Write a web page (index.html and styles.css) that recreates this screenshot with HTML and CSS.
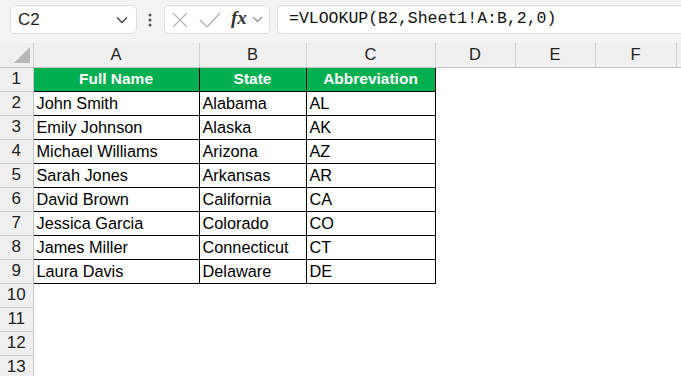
FILE: index.html
```html
<!DOCTYPE html>
<html lang="en">
<head>
  <meta charset="UTF-8">
  <title>Sheet1</title>
  <link rel="stylesheet" href="styles.css">
</head>
<body>
  <div class="formula-bar">
    <div class="name-box">
      <span>C2</span>
      <svg class="chev" width="12" height="8" viewBox="0 0 12 8"><path d="M1 1.5 L6 6.5 L11 1.5" fill="none" stroke="#444" stroke-width="1.3"/></svg>
    </div>
    <svg class="dots" width="4" height="14" viewBox="0 0 4 14"><circle cx="2" cy="2" r="1.5" fill="#555"/><circle cx="2" cy="7" r="1.5" fill="#555"/><circle cx="2" cy="12" r="1.5" fill="#555"/></svg>
    <div class="fx-box">
      <svg width="16" height="16" viewBox="0 0 16 16"><path d="M1 1 L15 15 M15 1 L1 15" stroke="#b4b4b4" stroke-width="1.3"/></svg>
      <svg width="22" height="16" viewBox="0 0 22 16"><path d="M1 8 L8 15 L21 1" fill="none" stroke="#b4b4b4" stroke-width="1.3"/></svg>
      <span class="fx">fx</span>
      <svg width="11" height="7" viewBox="0 0 11 7"><path d="M1 1 L5.5 5.5 L10 1" fill="none" stroke="#888" stroke-width="1.2"/></svg>
    </div>
    <div class="formula">=VLOOKUP(B2,Sheet1!A:B,2,0)</div>
  </div>

  <table class="sheet">
    <colgroup>
      <col class="c-num"><col class="c-a"><col class="c-b"><col class="c-c"><col class="c-d"><col class="c-e"><col class="c-f"><col>
    </colgroup>
    <tr class="col-head">
      <th class="corner"><span class="tri"></span></th>
      <th>A</th><th>B</th><th>C</th><th>D</th><th>E</th><th>F</th><th class="rest"></th>
    </tr>
    <tr>
      <td class="num">1</td>
      <td class="hd">Full Name</td><td class="hd">State</td><td class="hd">Abbreviation</td>
      <td></td><td></td><td></td><td></td>
    </tr>
    <tr><td class="num">2</td><td class="cell">John Smith</td><td class="cell">Alabama</td><td class="cell">AL</td><td></td><td></td><td></td><td></td></tr>
    <tr><td class="num">3</td><td class="cell">Emily Johnson</td><td class="cell">Alaska</td><td class="cell">AK</td><td></td><td></td><td></td><td></td></tr>
    <tr><td class="num">4</td><td class="cell">Michael Williams</td><td class="cell">Arizona</td><td class="cell">AZ</td><td></td><td></td><td></td><td></td></tr>
    <tr><td class="num">5</td><td class="cell">Sarah Jones</td><td class="cell">Arkansas</td><td class="cell">AR</td><td></td><td></td><td></td><td></td></tr>
    <tr><td class="num">6</td><td class="cell">David Brown</td><td class="cell">California</td><td class="cell">CA</td><td></td><td></td><td></td><td></td></tr>
    <tr><td class="num">7</td><td class="cell">Jessica Garcia</td><td class="cell">Colorado</td><td class="cell">CO</td><td></td><td></td><td></td><td></td></tr>
    <tr><td class="num">8</td><td class="cell">James Miller</td><td class="cell">Connecticut</td><td class="cell">CT</td><td></td><td></td><td></td><td></td></tr>
    <tr><td class="num">9</td><td class="cell">Laura Davis</td><td class="cell">Delaware</td><td class="cell">DE</td><td></td><td></td><td></td><td></td></tr>
    <tr><td class="num">10</td><td></td><td></td><td></td><td></td><td></td><td></td><td></td></tr>
    <tr><td class="num">11</td><td></td><td></td><td></td><td></td><td></td><td></td><td></td></tr>
    <tr><td class="num">12</td><td></td><td></td><td></td><td></td><td></td><td></td><td></td></tr>
    <tr><td class="num">13</td><td></td><td></td><td></td><td></td><td></td><td></td><td></td></tr>
  </table>
</body>
</html>
```

FILE: styles.css
```css
body {
  margin: 0;
  background: #ffffff;
  font-family: "Liberation Sans", Arial, sans-serif;
  color: #000;
  overflow: hidden;
}
.formula-bar {
  display: flex;
  align-items: center;
  background: #f3f3f3;
  padding: 5px 0 9px 10px;
  height: 29px;
}
.name-box {
  box-sizing: border-box;
  width: 127px;
  height: 29px;
  background: #fff;
  border: 1px solid #dedede;
  border-radius: 5px;
  display: flex;
  align-items: center;
  justify-content: space-between;
  padding: 0 8px 0 7px;
  font-size: 17px;
  color: #222;
}
.dots {
  margin: 0 12px 0 11px;
}
.fx-box {
  box-sizing: border-box;
  width: 106px;
  height: 29px;
  background: #fff;
  border: 1px solid #dedede;
  border-radius: 5px;
  display: flex;
  align-items: center;
  gap: 0;
  padding: 0 2px 0 7px;
}
.fx-box svg:nth-child(2) {
  margin-left: 11px;
}
.fx {
  font-family: "Liberation Serif", "Times New Roman", serif;
  font-style: italic;
  font-weight: bold;
  font-size: 19px;
  color: #333;
  margin: -3px 5px 0 10px;
}
.formula {
  box-sizing: border-box;
  flex: 1;
  height: 29px;
  margin-left: 7px;
  background: #fff;
  border: 1px solid #dedede;
  border-right: none;
  border-radius: 5px 0 0 5px;
  padding: 3px 0 0 11px;
  font-family: "Liberation Mono", "Courier New", monospace;
  font-size: 16.5px;
  color: #111;
}
.sheet {
  border-collapse: collapse;
  table-layout: fixed;
  width: 690px;
  font-size: 16.3px;
}
.c-num { width: 33px; }
.c-a { width: 166px; }
.c-b { width: 107px; }
.c-c { width: 129px; }
.c-d { width: 80px; }
.c-e { width: 80px; }
.c-f { width: 81px; }
.sheet tr {
  height: 24px;
}
.sheet td,
.sheet th {
  padding: 0;
  white-space: nowrap;
  overflow: hidden;
}
.col-head th {
  background: #f0f0f0;
  font-weight: normal;
  font-size: 16.5px;
  color: #222;
  border-right: 1px solid #d2d2d2;
  border-bottom: 1px solid #c4c4c4;
  text-align: center;
}
.col-head th.rest {
  border-right: none;
}
.corner {
  position: relative;
}
.tri {
  position: absolute;
  right: 3px;
  bottom: 4px;
  width: 0;
  height: 0;
  border-left: 16px solid transparent;
  border-bottom: 16px solid #b8b8b8;
}
.num {
  background: #f0f0f0;
  text-align: center;
  font-size: 17px;
  color: #222;
  border-right: 1px solid #c4c4c4;
  border-bottom: 1px solid #c8c8c8;
}
.hd {
  background: #00b050;
  color: #fff;
  font-weight: bold;
  font-size: 15.5px;
  text-align: center;
  border: 1px solid #000;
}
.cell {
  border: 1px solid #000;
  padding-left: 3px !important;
}
```
